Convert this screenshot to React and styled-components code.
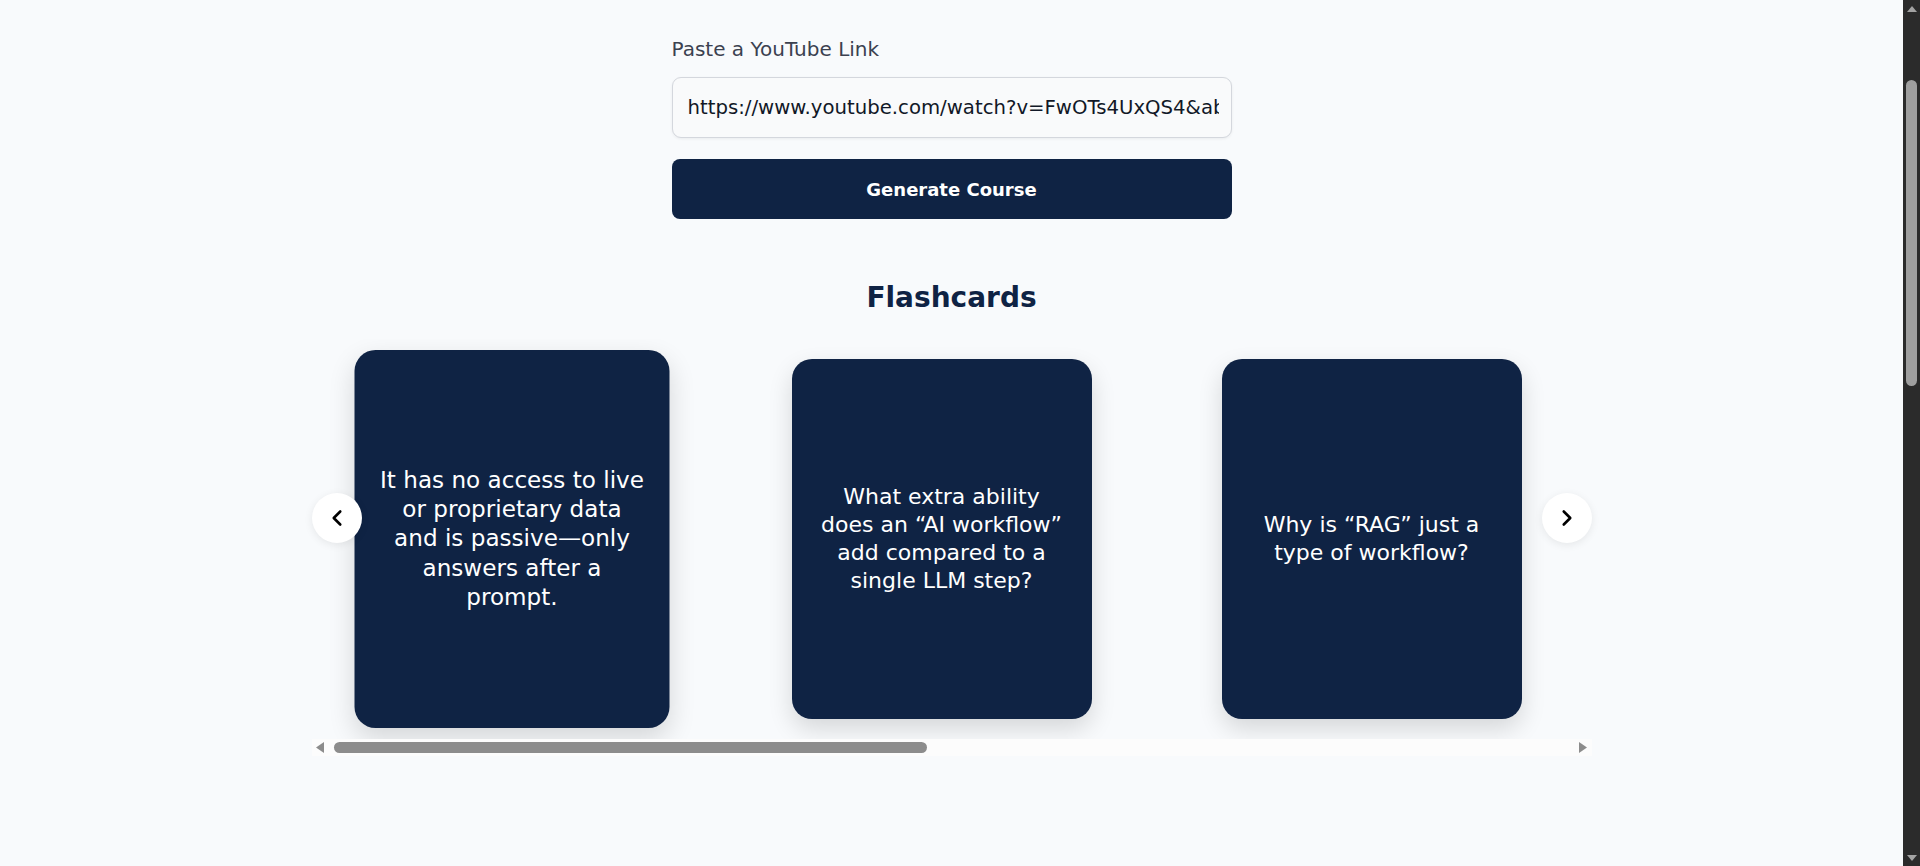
import React, { useState } from "react";
import styled, { createGlobalStyle } from "styled-components";
import { ChevronLeft, ChevronRight } from "lucide-react";

const GlobalStyle = createGlobalStyle`
  body {
    margin: 0;
    background: #f8fafc;
    font-family: "DejaVu Sans", "Open Sans", sans-serif;
    color: #0f2344;
  }
`;

// page + a drawn window scrollbar on the right
const Page = styled.div`
  display: flex;
  height: 100vh;
  overflow: hidden;
  background: #f8fafc;
`;

const Main = styled.main`
  flex: 1;
  min-width: 0;
  padding-top: 36px;
`;

const VScroll = styled.div`
  flex: 0 0 17px;
  display: flex;
  flex-direction: column;
  align-items: center;
  background: #2b2b2b;
`;

const VArrow = styled.div`
  height: 17px;
  display: flex;
  align-items: center;
  justify-content: center;
  color: #a3a3a3;
`;

const VThumbArea = styled.div`
  flex: 1;
  width: 100%;
  display: flex;
  justify-content: center;
  padding-top: 63px;
`;

const VThumb = styled.div`
  width: 11px;
  height: 306px;
  border-radius: 6px;
  background: #9f9f9f;
`;

const Form = styled.div`
  width: 560px;
  margin: 0 auto;
  display: flex;
  flex-direction: column;
`;

const Label = styled.label`
  font-size: 20px;
  line-height: 26px;
  color: #3b4150;
  margin-bottom: 15px;
`;

const UrlInput = styled.input`
  box-sizing: border-box;
  width: 100%;
  height: 61px;
  padding: 0 12px 0 15px;
  border: 1px solid #d4d7dd;
  border-radius: 9px;
  background: #f9fafb;
  box-shadow: 0 1px 3px rgba(0, 0, 0, 0.06);
  font-family: inherit;
  font-size: 19.7px;
  color: #111827;
  outline: none;
`;

const GenerateButton = styled.button`
  height: 60px;
  margin-top: 21px;
  border: none;
  border-radius: 8px;
  background: #0f2344;
  color: #ffffff;
  font-family: inherit;
  font-size: 18px;
  font-weight: 700;
  cursor: pointer;
`;

const Section = styled.section`
  margin-top: 61px;
`;

const Heading = styled.h2`
  margin: 0 0 23px;
  text-align: center;
  font-size: 28px;
  line-height: 36px;
  font-weight: 700;
  color: #0f2344;
`;

const Carousel = styled.div`
  position: relative;
  width: 1280px;
  margin: 0 auto;
`;

const Track = styled.div`
  display: flex;
  gap: 130px;
  padding: 20px 50px;
  overflow-x: auto;
  scrollbar-width: none;
`;

const Card = styled.div`
  flex: 0 0 300px;
  height: 360px;
  box-sizing: border-box;
  padding: 20px 23px;
  display: flex;
  align-items: center;
  justify-content: center;
  text-align: center;
  background: #0f2344;
  color: #ffffff;
  border-radius: 20px;
  font-size: 22px;
  line-height: 28px;
  box-shadow: 0 10px 25px rgba(0, 0, 0, 0.14);
  transform: ${(p) => (p.$active ? "scale(1.05)" : "none")};
  transition: transform 0.2s ease;
  cursor: pointer;
`;

const ArrowButton = styled.button`
  position: absolute;
  top: 154px;
  ${(p) => (p.$side === "left" ? "left: 0;" : "right: 0;")}
  width: 50px;
  height: 50px;
  padding: 0;
  border: none;
  border-radius: 50%;
  background: #ffffff;
  box-shadow: 0 2px 8px rgba(0, 0, 0, 0.08);
  display: flex;
  align-items: center;
  justify-content: center;
  color: #000000;
  cursor: pointer;
  z-index: 2;
`;

// drawn horizontal scrollbar of the card track
const HScroll = styled.div`
  height: 17px;
  display: flex;
  align-items: center;
  background: #fcfcfc;
`;

const HArrow = styled.div`
  flex: 0 0 17px;
  height: 17px;
  display: flex;
  align-items: center;
  justify-content: center;
  color: #8c8c8c;
`;

const HThumbArea = styled.div`
  flex: 1;
  padding: 0 5px;
`;

const HThumb = styled.div`
  height: 11px;
  border-radius: 6px;
  background: #8c8c8c;
`;

const Tri = ({ dir }) => {
  const pts = {
    up: "0,6 5,0 10,6",
    down: "0,0 10,0 5,6",
    left: "8,0 8,11 0,5.5",
    right: "0,0 0,11 8,5.5",
  }[dir];
  const vertical = dir === "up" || dir === "down";
  return (
    <svg
      width={vertical ? 10 : 8}
      height={vertical ? 6 : 11}
      viewBox={vertical ? "0 0 10 6" : "0 0 8 11"}
    >
      <polygon points={pts} fill="currentColor" />
    </svg>
  );
};

const cards = [
  {
    q: "What is the main limitation of a plain LLM?",
    a: "It has no access to live or proprietary data and is passive—only answers after a prompt.",
  },
  {
    q: "What extra ability does an “AI workflow” add compared to a single LLM step?",
    a: "It follows a fixed, predefined path of steps and tool calls set by a human.",
  },
  {
    q: "Why is “RAG” just a type of workflow?",
    a: "Because the retrieval step is decided ahead of time by the developer.",
  },
  {
    q: "What makes an AI agent different from a workflow?",
    a: "The LLM itself reasons, acts and decides the next step on its own.",
  },
  {
    q: "What does the ReAct framework combine?",
    a: "Reasoning and acting in an iterative loop.",
  },
  {
    q: "Why can an agent improve its own output?",
    a: "It can observe results, critique them and iterate without a human.",
  },
];

export default function App() {
  const [flipped, setFlipped] = useState(0);
  const [url, setUrl] = useState(
    "https://www.youtube.com/watch?v=FwOTs4UxQS4&ab_channel=JeffSu"
  );

  return (
    <Page>
      <GlobalStyle />
      <Main>
        <Form>
          <Label htmlFor="yt">Paste a YouTube Link</Label>
          <UrlInput id="yt" value={url} onChange={(e) => setUrl(e.target.value)} />
          <GenerateButton>Generate Course</GenerateButton>
        </Form>

        <Section>
          <Heading>Flashcards</Heading>
          <Carousel>
            <ArrowButton $side="left" aria-label="Previous">
              <ChevronLeft size={26} strokeWidth={2.4} />
            </ArrowButton>
            <Track>
              {cards.map((it, i) => (
                <Card
                  key={i}
                  $active={flipped === i}
                  onClick={() => setFlipped(flipped === i ? -1 : i)}
                >
                  {flipped === i ? it.a : it.q}
                </Card>
              ))}
            </Track>
            <ArrowButton $side="right" aria-label="Next">
              <ChevronRight size={26} strokeWidth={2.4} />
            </ArrowButton>
            <HScroll>
              <HArrow>
                <Tri dir="left" />
              </HArrow>
              <HThumbArea>
                <HThumb style={{ width: "48%" }} />
              </HThumbArea>
              <HArrow>
                <Tri dir="right" />
              </HArrow>
            </HScroll>
          </Carousel>
        </Section>
      </Main>
      <VScroll>
        <VArrow>
          <Tri dir="up" />
        </VArrow>
        <VThumbArea>
          <VThumb />
        </VThumbArea>
        <VArrow>
          <Tri dir="down" />
        </VArrow>
      </VScroll>
    </Page>
  );
}
